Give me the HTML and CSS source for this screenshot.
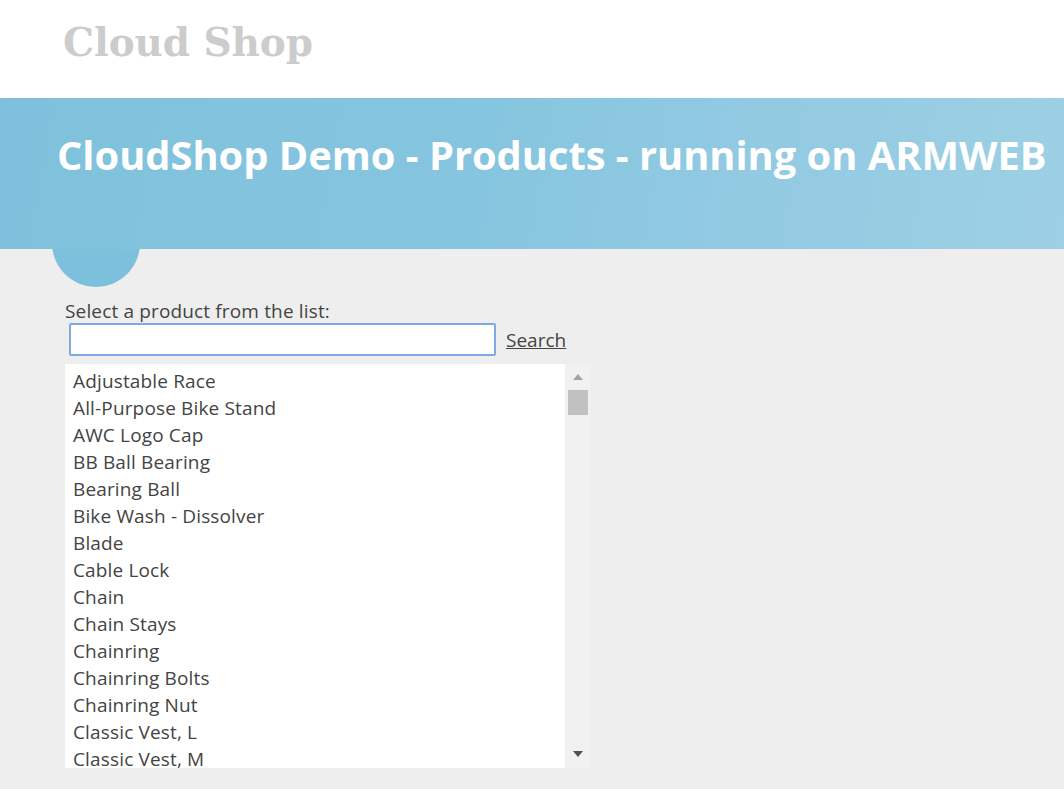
FILE: index.html
```html
<!DOCTYPE html>
<html>
<head>
<meta charset="utf-8">
<title>Cloud Shop</title>
<link rel="stylesheet" href="styles.css">
</head>
<body>
<header class="top">
  <div class="brand">Cloud Shop</div>
</header>
<section class="band">
  <h1 class="band-title">CloudShop Demo - Products - running on ARMWEB</h1>
  <div class="blob"></div>
</section>
<main class="content">
  <div class="label">Select a product from the list:</div>
  <div class="search-row">
    <input class="search-input" type="text">
    <a class="search-link" href="#">Search</a>
  </div>
  <div class="listbox">
    <ul class="items">
      <li>Adjustable Race</li>
      <li>All-Purpose Bike Stand</li>
      <li>AWC Logo Cap</li>
      <li>BB Ball Bearing</li>
      <li>Bearing Ball</li>
      <li>Bike Wash - Dissolver</li>
      <li>Blade</li>
      <li>Cable Lock</li>
      <li>Chain</li>
      <li>Chain Stays</li>
      <li>Chainring</li>
      <li>Chainring Bolts</li>
      <li>Chainring Nut</li>
      <li>Classic Vest, L</li>
      <li>Classic Vest, M</li>
    </ul>
    <div class="scrollbar">
      <div class="arrow up"></div>
      <div class="thumb"></div>
      <div class="track"></div>
      <div class="arrow down"></div>
    </div>
  </div>
</main>
</body>
</html>
```

FILE: styles.css
```css
html, body {
  margin: 0;
  padding: 0;
}
body {
  background: #eeeeee;
  width: 1064px;
  height: 789px;
  overflow: hidden;
  font-family: "Open Sans", "Noto Sans", sans-serif;
}
.top {
  background: #ffffff;
  height: 98px;
  padding-left: 63px;
  box-sizing: border-box;
}
.brand {
  font-family: "DejaVu Serif", serif;
  font-weight: 700;
  font-size: 39px;
  color: #cccccc;
  line-height: 1;
  padding-top: 23px;
  letter-spacing: -0.1px;
}
.band {
  position: relative;
  height: 151px;
  background: linear-gradient(100deg, #7fc1dc 0%, #86c5df 45%, #92cae2 70%, #9dd0e4 100%);
  box-sizing: border-box;
  padding: 33px 0 0 57px;
}
.band-title {
  margin: 0;
  font-family: "Open Sans", "Noto Sans", sans-serif;
  font-weight: 700;
  font-size: 39.8px;
  color: #ffffff;
  line-height: 48px;
  white-space: nowrap;
  letter-spacing: 0;
}
.blob {
  position: absolute;
  left: 52px;
  top: 101px;
  width: 88px;
  height: 88px;
  border-radius: 50%;
  background: #7dc0dc;
  z-index: -1;
}
.content {
  padding: 50px 0 0 65px;
  color: #444444;
  font-size: 19px;
}
.label {
  line-height: 24px;
  color: #444;
  letter-spacing: 0.15px;
}
.search-row {
  display: flex;
  align-items: center;
  margin-top: 0;
  margin-left: 4px;
  gap: 10px;
}
.search-input {
  width: 427px;
  height: 33px;
  box-sizing: border-box;
  border: 2px solid #7ea9e3;
  border-radius: 2px;
  background: #fff;
  margin: 0;
  outline: none;
}
.search-link {
  color: #444;
  text-decoration: underline;
  font-size: 19px;
  line-height: 32px;
  letter-spacing: 0;
}
.listbox {
  display: flex;
  margin-top: 8px;
  width: 525px;
  height: 404px;
  overflow: hidden;
}
.items {
  list-style: none;
  margin: 0;
  padding: 4px 0 0 8px;
  background: #ffffff;
  width: 500px;
  box-sizing: border-box;
  height: 404px;
  overflow: hidden;
}
.items li {
  line-height: 27px;
  height: 27px;
  font-size: 19px;
  letter-spacing: 0.15px;
  color: #444;
  white-space: nowrap;
}
.scrollbar {
  width: 25px;
  background: #f1f1f1;
  display: flex;
  flex-direction: column;
  align-items: center;
  height: 404px;
}
.arrow {
  width: 0;
  height: 0;
  border-left: 5px solid transparent;
  border-right: 5px solid transparent;
}
.arrow.up {
  border-bottom: 6px solid #a3a3a3;
  margin-top: 10px;
}
.arrow.down {
  border-top: 6px solid #505050;
  margin-bottom: 11px;
}
.thumb {
  width: 20px;
  height: 25px;
  background: #c1c1c1;
  margin-top: 10px;
  margin-left: 1px;
}
.track {
  flex: 1;
}
```
